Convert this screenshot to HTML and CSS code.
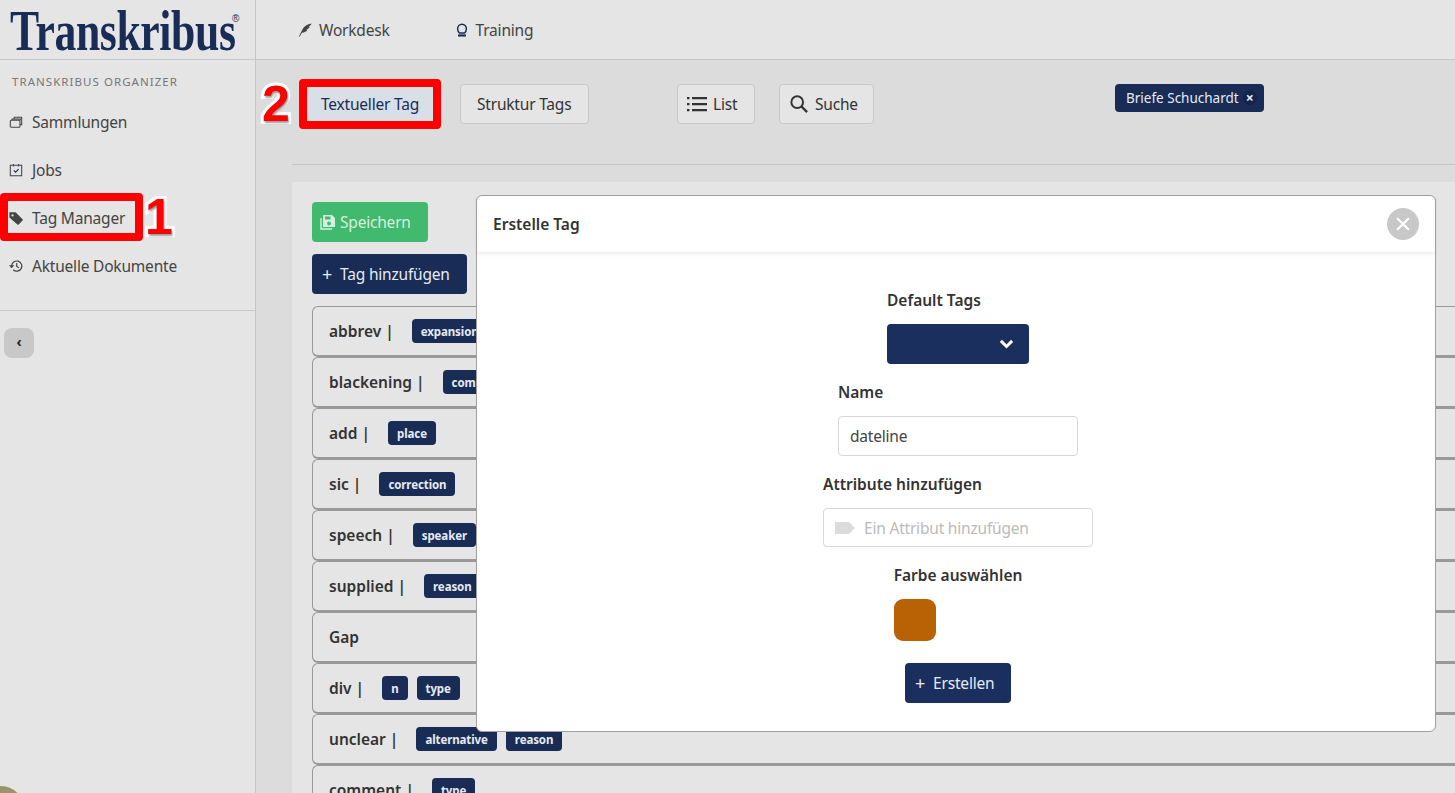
FILE: index.html
```html
<!DOCTYPE html>
<html lang="de">
<head>
  <meta charset="UTF-8">
  <title>Transkribus Organizer</title>
  <link rel="stylesheet" href="styles.css">
</head>
<body>

  <aside class="sidebar">
    <div class="logo"><span class="logo-text">Transkribus</span><span class="logo-mark">®</span></div>
    <div class="side-title">TRANSKRIBUS ORGANIZER</div>
    <a class="side-item">
      <svg class="side-icon" viewBox="0 0 16 16"><path d="M1.500 7a1 1 0 0 1 1-1h9a1 1 0 0 1 1 1v6a1 1 0 0 1-1 1h-9a1 1 0 0 1-1-1zM3.500 6V4.500h9.500V6M6 4.500V2.500h8.500V11H13" fill="none" stroke="#444" stroke-width="1.200"/></svg>
      Sammlungen
    </a>
    <a class="side-item">
      <svg class="side-icon" viewBox="0 0 16 16"><path d="M1.500 2.500h13v12h-13zM5 1v3M11 1v3" fill="none" stroke="#444" stroke-width="1.200"/><path d="M5.500 8.500l2 2L11 7" fill="none" stroke="#182c56" stroke-width="1.300"/></svg>
      Jobs
    </a>
    <a class="side-item">
      <svg class="side-icon" viewBox="0 0 16 16"><path d="M0.500 1.500h7l8 8a1 1 0 0 1 0 1.400l-4.500 4.500a1 1 0 0 1-1.400 0l-9.100-8z" fill="#444"/><circle cx="4" cy="5" r="1.300" fill="#e5e5e5"/></svg>
      Tag Manager
    </a>
    <a class="side-item">
      <svg class="side-icon" viewBox="0 0 16 16"><path d="M3 8a5.800 5.800 0 1 1 1.800 4.300" fill="none" stroke="#444" stroke-width="1.400"/><path d="M0 7h6L3 10.500z" fill="#444"/><path d="M8.800 4.500v4l2.600 1.500" fill="none" stroke="#444" stroke-width="1.300"/></svg>
      Aktuelle Dokumente
    </a>
    <div class="side-rule"></div>
    <button class="collapse-btn">‹</button>
  </aside>

  <div class="main">
    <header class="topnav">
      <a class="nav-link">
        <svg class="nav-icon" viewBox="0 0 16 16"><path d="M1 15.500L5 7.500C7 3.500 10.500 1.500 15.500 0.500 14.500 2.500 13.500 3.500 12 4.200L13.500 4.500C12.500 6 11.500 6.800 9.500 7.300L11 7.800C9.500 10 7.500 11 4.500 11L2 15.500z" fill="#444"/></svg>
        Workdesk
      </a>
      <a class="nav-link">
        <svg class="nav-icon" viewBox="0 0 16 16"><path d="M5.300 11.500C3.800 10.500 3 9 3 6.500a5 5 0 0 1 10 0c0 2.500-.8 4-2.300 5z" fill="none" stroke="#182c56" stroke-width="1.700"/><path d="M3.500 13h9v2.500h-9z" fill="#182c56"/></svg>
        Training
      </a>
    </header>

    <div class="toolbar">
      <button class="tool-btn tool-active">Textueller Tag</button>
      <button class="tool-btn tool-struct">Struktur Tags</button>
      <button class="tool-btn tool-list">
        <svg class="tool-icon" viewBox="0 0 20 20"><path d="M5 3h15v2.200H5zM5 9h15v2.200H5zM5 15h15v2.200H5z" fill="#333"/><path d="M0 3h2.500v2.200H0zM0 9h2.500v2.200H0zM0 15h2.500v2.200H0z" fill="#333"/></svg>
        List
      </button>
      <button class="tool-btn tool-search">
        <svg class="tool-icon search-icon" viewBox="0 0 20 20"><circle cx="8" cy="8" r="6.500" fill="none" stroke="#333" stroke-width="2.200"/><path d="M12.500 12.500L19 19" stroke="#333" stroke-width="2.600"/></svg>
        Suche
      </button>
      <div class="doc-chip">Briefe Schuchardt <span class="doc-x">×</span></div>
    </div>
    <div class="toolbar-rule"></div>

    <section class="content">
      <button class="action-btn save-btn">
        <svg class="save-icon" viewBox="0 0 16 16"><path d="M3 1h9l3 3v9H3z" fill="#d5f0df"/><path d="M1 4v11h11" fill="none" stroke="#d5f0df" stroke-width="1.400"/><path d="M5 2.500h5.500V5.500H5z" fill="#41b96e"/><circle cx="9" cy="9.500" r="1.900" fill="#41b96e"/></svg>
        Speichern
      </button>
      <button class="action-btn add-btn"><span class="plus">+</span>Tag hinzufügen</button>

      <div class="tag-row"><b>abbrev |</b><span class="chip">expansion</span></div>
      <div class="tag-row"><b>blackening |</b><span class="chip">comment</span></div>
      <div class="tag-row"><b>add |</b><span class="chip">place</span></div>
      <div class="tag-row"><b>sic |</b><span class="chip">correction</span></div>
      <div class="tag-row"><b>speech |</b><span class="chip">speaker</span></div>
      <div class="tag-row"><b>supplied |</b><span class="chip">reason</span></div>
      <div class="tag-row"><b>Gap</b></div>
      <div class="tag-row"><b>div |</b><span class="chip">n</span><span class="chip">type</span></div>
      <div class="tag-row"><b>unclear |</b><span class="chip">alternative</span><span class="chip">reason</span></div>
      <div class="tag-row"><b>comment |</b><span class="chip">type</span></div>
    </section>
  </div>

  <div class="modal">
    <div class="modal-head">
      <span class="modal-title">Erstelle Tag</span>
      <span class="modal-close">
        <svg viewBox="0 0 12 12"><path d="M1 1l10 10M11 1L1 11" stroke="#fff" stroke-width="1.800"/></svg>
      </span>
    </div>
    <div class="modal-body">
      <div class="field">
        <label>Default Tags</label>
        <div class="select-box">
          <svg viewBox="0 0 12 8"><path d="M1.500 1.500L6 6l4.500-4.500" fill="none" stroke="#fff" stroke-width="2.400"/></svg>
        </div>
      </div>
      <div class="field">
        <label>Name</label>
        <div class="text-box name-box">dateline</div>
      </div>
      <div class="field">
        <label>Attribute hinzufügen</label>
        <div class="text-box attr-box">
          <svg viewBox="0 0 20 14"><path d="M0 1h14l6 6-6 6H0z" fill="#dcdcdc"/></svg>
          Ein Attribut hinzufügen
        </div>
      </div>
      <div class="field">
        <label>Farbe auswählen</label>
        <div class="swatch"></div>
      </div>
      <button class="create-btn"><span class="plus">+</span>Erstellen</button>
    </div>
  </div>

  <div class="mark mark-one"></div>
  <div class="mark mark-two"></div>
  <div class="mark-num num-one">1</div>
  <div class="mark-num num-two">2</div>
  <div class="corner-badge"></div>

</body>
</html>
```

FILE: styles.css
```css
* { box-sizing: border-box; }

body {
  margin: 0;
  height: 793px;
  overflow: hidden;
  display: flex;
  position: relative;
  font-family: "Noto Sans", sans-serif;
  font-size: 15.500px;
  letter-spacing: -0.2px;
  color: #444;
  background: #dcdcdc;
}

button {
  font-family: inherit;
  font-size: inherit;
  letter-spacing: inherit;
}

/* sidebar */
.sidebar {
  width: 256px;
  flex-shrink: 0;
  background: #e5e5e5;
  border-right: 1px solid #c6c6c6;
}

.logo {
  display: flex;
  height: 60px;
  padding: 2px 0 0 10px;
  border-bottom: 1px solid #c6c6c6;
  color: #182c56;
  white-space: nowrap;
}

.logo-text {
  display: inline-block;
  width: 222px;
  font-family: "Liberation Serif", serif;
  font-weight: bold;
  font-size: 56px;
  line-height: 58px;
  letter-spacing: -0.5px;
  transform: scaleX(0.78);
  transform-origin: left top;
}

.logo-mark {
  margin-top: 11px;
  font-family: "Liberation Sans", sans-serif;
  font-size: 10px;
  line-height: 12px;
  letter-spacing: 0;
}

.side-title {
  height: 38px;
  padding: 13px 0 0 12px;
  font-size: 11.500px;
  line-height: 18px;
  letter-spacing: 1.050px;
  color: #777;
}

.side-item {
  display: flex;
  align-items: center;
  height: 48px;
  padding-left: 9px;
  color: #444;
}

.side-icon {
  width: 14px;
  height: 14px;
  margin-right: 9px;
}

.side-rule {
  margin-top: 20px;
  border-top: 1px solid #c6c6c6;
}

.collapse-btn {
  display: block;
  width: 30px;
  height: 30px;
  margin: 17px 0 0 4px;
  padding: 0 0 3px;
  border: none;
  border-radius: 8px;
  background: #c8c8c8;
  color: #222;
  font-size: 14px;
  font-weight: bold;
}

/* main column */
.main {
  display: flex;
  flex-direction: column;
  flex: 1;
  min-width: 0;
  height: 793px;
}

.topnav {
  display: flex;
  height: 60px;
  padding: 1px 0 0 42px;
  align-items: center;
  gap: 65px;
  background: #e5e5e5;
  border-bottom: 1px solid #c6c6c6;
}

.nav-link {
  display: flex;
  align-items: center;
  gap: 7px;
  color: #444;
}

.nav-icon {
  width: 14px;
  height: 14px;
}

.toolbar {
  display: flex;
  align-items: flex-start;
  height: 104px;
  flex-shrink: 0;
  padding: 24px 0 0 48px;
}

.tool-btn {
  display: flex;
  align-items: center;
  height: 40px;
  margin-right: 24px;
  padding: 0 16px;
  border: 1px solid #c8c8c8;
  border-radius: 4px;
  background: #e5e5e5;
  color: #333;
}

.tool-active {
  background: #d9dfe6;
  color: #182c56;
  width: 132px;
  justify-content: center;
  padding: 0;
}

.tool-struct {
  width: 129px;
}

.tool-list {
  margin-left: 64px;
  width: 78px;
  padding: 0 0 0 9px;
}

.tool-search {
  width: 95px;
  padding: 0 0 0 10px;
}

.tool-icon {
  width: 20px;
  height: 20px;
  margin-right: 6px;
}

.search-icon {
  width: 18px;
  height: 18px;
  margin-right: 7px;
}

.doc-chip {
  display: flex;
  align-items: center;
  width: 149px;
  height: 28px;
  margin-left: 217px;
  padding: 0 0 0 11px;
  border-radius: 4px;
  background: #182c56;
  color: #e6ebf3;
  font-size: 13.500px;
  letter-spacing: 0;
  white-space: nowrap;
}

.doc-x {
  display: inline-block;
  width: 14px;
  height: 14px;
  margin-left: 4px;
  border-radius: 50%;
  background: #13234a;
  font-size: 14px;
  font-weight: bold;
  line-height: 14px;
  text-align: center;
}

.toolbar-rule {
  margin-left: 36px;
  border-top: 1px solid #c6c6c6;
}

.content {
  flex: 1;
  overflow: hidden;
  margin: 17px 0 0 36px;
  padding: 20px 0 0 20px;
  background: #e5e5e5;
}

.action-btn {
  display: flex;
  align-items: center;
  height: 40px;
  border: none;
  border-radius: 4px;
}

.save-btn {
  width: 116px;
  padding: 0 0 0 8px;
  background: #41b96e;
  color: #d5f0df;
}

.save-icon {
  width: 16px;
  height: 16px;
  margin-right: 4px;
}

.add-btn {
  width: 155px;
  margin: 12px 0;
  padding: 0 0 0 10px;
  background: #182c56;
  color: #e6ebf3;
}

.plus {
  margin-right: 8px;
  font-size: 18px;
  line-height: 20px;
}

.tag-row {
  display: flex;
  align-items: center;
  height: 51px;
  flex-shrink: 0;
  padding-left: 16px;
  border: 1px solid #999;
  border-bottom-width: 2px;
  border-right: none;
  border-radius: 6px 0 0 6px;
  color: #333;
}

.tag-row b {
  margin-right: 9px;
  font-weight: 600;
  letter-spacing: 0;
}

.chip {
  display: inline-block;
  height: 24px;
  margin-left: 9px;
  padding: 1px 9px 0;
  border-radius: 4px;
  background: #182c56;
  color: #e6ebf3;
  font-size: 11.500px;
  font-weight: 700;
  line-height: 23px;
  letter-spacing: -0.1px;
}

/* dialog */
.modal {
  position: absolute;
  left: 476px;
  top: 195px;
  width: 960px;
  height: 537px;
  background: #fff;
  border: 1px solid #a0a0a0;
  border-radius: 6px;
}

.modal-head {
  display: flex;
  align-items: center;
  justify-content: space-between;
  height: 56px;
  padding: 0 16px;
  box-shadow: 0 2px 4px rgba(0, 0, 0, 0.08);
}

.modal-title {
  font-weight: 600;
  letter-spacing: 0;
  color: #333;
}

.modal-close {
  display: flex;
  align-items: center;
  justify-content: center;
  width: 32px;
  height: 32px;
  border-radius: 50%;
  background: #c8c8c8;
}

.modal-close svg {
  width: 14px;
  height: 14px;
}

.modal-body {
  display: flex;
  flex-direction: column;
  align-items: center;
  padding: 36px 0 0 4px;
}

.field {
  margin-bottom: 16px;
}

.field label {
  display: block;
  height: 24px;
  margin-bottom: 12px;
  font-weight: 600;
  line-height: 24px;
  letter-spacing: 0;
  color: #333;
}

.select-box {
  display: flex;
  align-items: center;
  justify-content: flex-end;
  width: 142px;
  height: 40px;
  padding-right: 15px;
  border-radius: 4px;
  background: #1b2f5f;
}

.select-box svg {
  width: 15px;
  height: 10px;
}

.text-box {
  display: flex;
  align-items: center;
  border: 1px solid #d8d8d8;
  border-radius: 4px;
  background: #fff;
}

.name-box {
  width: 240px;
  height: 40px;
  padding-left: 11px;
}

.attr-box {
  width: 270px;
  height: 39px;
  padding-left: 11px;
  color: #bbb;
}

.attr-box svg {
  width: 20px;
  height: 14px;
  margin-right: 9px;
}

.swatch {
  width: 42px;
  height: 42px;
  margin-bottom: 6px;
  border-radius: 9px;
  background: #b86205;
}

.create-btn {
  display: flex;
  align-items: center;
  width: 106px;
  height: 40px;
  padding: 0 0 0 10px;
  border: none;
  border-radius: 4px;
  background: #1b2f5f;
  color: #e6ebf3;
}

/* tutorial markers drawn over the page */
.mark {
  position: absolute;
  border: 8px solid #f00;
  border-radius: 4px;
}

.mark-one {
  left: 0;
  top: 193px;
  width: 143px;
  height: 48px;
}

.mark-two {
  left: 299px;
  top: 79px;
  width: 142px;
  height: 50px;
}

.mark-num {
  position: absolute;
  font-family: "Liberation Sans", sans-serif;
  font-size: 50px;
  font-weight: bold;
  line-height: 50px;
  letter-spacing: 0;
  color: #f00;
  -webkit-text-stroke: 6px #fff;
  paint-order: stroke fill;
  text-shadow: 1px 2px 2px rgba(0, 0, 0, 0.4);
}

.num-one {
  left: 145px;
  top: 192px;
}

.num-two {
  left: 262px;
  top: 79px;
}

.corner-badge {
  position: absolute;
  left: -22px;
  top: 786px;
  width: 46px;
  height: 46px;
  border-radius: 50%;
  background: #9c9468;
}
```
